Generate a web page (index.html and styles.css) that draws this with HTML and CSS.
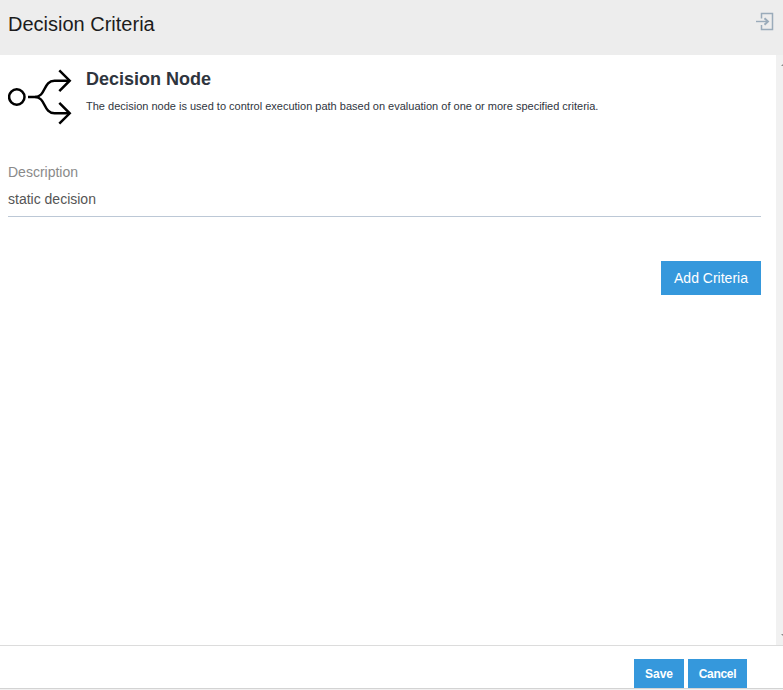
FILE: index.html
```html
<!DOCTYPE html>
<html lang="en">
<head>
<meta charset="utf-8">
<title>Decision Criteria</title>
<link rel="stylesheet" href="styles.css">
</head>
<body>
<div class="dialog">
  <header class="dialog-header">
    <h1 class="dialog-title">Decision Criteria</h1>
    <svg class="exit-icon" width="20" height="20" viewBox="0 0 20 20" fill="none" stroke="#9aabba">
      <path d="M6.500 6.500V1.500H17.500V17.500H6.500V13" stroke-width="1.5"/>
      <path d="M1 9.500H13" stroke-width="1.4"/>
      <path d="M9.500 6.300L13 9.500L9.500 12.700" stroke-width="1.9"/>
    </svg>
  </header>
  <div class="dialog-body">
    <main class="content">
      <section class="intro">
        <svg class="node-icon" width="64" height="56" viewBox="0 0 64 56" fill="none" stroke="#000" stroke-width="2.5">
          <circle cx="8.8" cy="28" r="7.7"/>
          <path d="M20 28H27C38 28 35 11.700 46.500 11.700H62"/>
          <path d="M27 28C38 28 35 44.300 46.500 44.300H62"/>
          <path d="M51.300 1.300L61.700 11.700L51.300 22.100M51.300 33.900L61.700 44.300L51.300 54.700"/>
        </svg>
        <div class="intro-text">
          <h2 class="node-title">Decision Node</h2>
          <p class="node-help">The decision node is used to control execution path based on evaluation of one or more specified criteria.</p>
        </div>
      </section>
      <div class="field">
        <div class="field-label">Description</div>
        <div class="field-value">static decision</div>
      </div>
      <div class="actions"><button class="btn btn-add">Add Criteria</button></div>
    </main>
    <div class="scrollbar">
      <svg width="7" height="590" viewBox="0 0 7 590" fill="#8b8b8b"><path d="M5 11L8 8V11ZM5 579H8V582Z"/></svg>
    </div>
  </div>
  <footer class="dialog-footer">
    <button class="btn btn-save">Save</button>
    <button class="btn btn-cancel">Cancel</button>
  </footer>
</div>
</body>
</html>
```

FILE: styles.css
```css
* { box-sizing: border-box; }
body {
  margin: 0;
  overflow: hidden;
  background: #f1f1f1;
  font-family: "Liberation Sans", Arial, sans-serif;
}
h1, h2, p { margin: 0; }
.dialog {
  display: flex;
  flex-direction: column;
  height: 689px;
  background: #fff;
  border-bottom: 1px solid #d3d3d3;
}
.dialog-header {
  display: flex;
  justify-content: space-between;
  align-items: flex-start;
  height: 55px;
  padding: 12px 8px 0 8px;
  background: #ededed;
}
.dialog-title {
  font-size: 20px;
  font-weight: 400;
  line-height: 24px;
  color: #1c1c1c;
}
.dialog-body { display: flex; height: 590px; }
.content { flex: 1; padding: 14px 15px 0 8px; }
.intro { display: flex; gap: 14px; height: 93px; }
.node-title {
  font-size: 18px;
  line-height: 20px;
  color: #2f353e;
}
.node-help {
  margin-top: 10px;
  font-size: 11px;
  line-height: 14px;
  white-space: nowrap;
  color: #2f353e;
}
.field { height: 55px; border-bottom: 1px solid #bcc8d6; }
.field-label {
  font-size: 14px;
  line-height: 20px;
  color: #8a8a8a;
}
.field-value {
  margin-top: 7px;
  font-size: 14px;
  line-height: 20px;
  color: #555;
}
.actions { display: flex; justify-content: flex-end; margin-top: 44px; }
.btn {
  padding: 0;
  border: 0;
  background: #3598dc;
  color: #fff;
  font-family: inherit;
  text-align: center;
}
.btn-add { width: 100px; height: 34px; font-size: 14px; }
.scrollbar { width: 7px; background: #f1f1f1; }
.scrollbar svg { display: block; }
.dialog-footer {
  display: flex;
  flex: 1;
  justify-content: flex-end;
  align-items: flex-end;
  gap: 4px;
  padding-right: 36px;
  border-top: 1px solid #dcdcdc;
}
.btn-save, .btn-cancel { height: 29px; font-size: 12px; font-weight: 700; }
.btn-save { width: 50px; }
.btn-cancel { width: 59px; letter-spacing: -0.3px; }
```
